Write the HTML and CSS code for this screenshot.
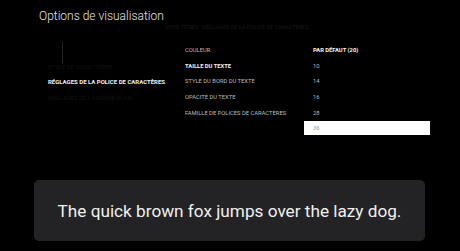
FILE: index.html
```html
<!DOCTYPE html>
<html lang="fr">
<head>
<meta charset="utf-8">
<link rel="stylesheet" href="styles.css">
</head>
<body>
<div class="screen">
  <h1 class="title">Options de visualisation</h1>
  <div class="crumb">SOUS-TITRES · RÉGLAGES DE LA POLICE DE CARACTÈRES</div>
  <div class="settings">
    <nav class="nav">
      <div class="nav-item"><div class="scroll-line"></div></div>
      <div class="nav-item faint">STYLE DE SOUS-TITRES</div>
      <div class="nav-item active">RÉGLAGES DE LA POLICE DE CARACTÈRES</div>
      <div class="nav-item faint">RÉGLAGES DE L'ARRIÈRE-PLAN</div>
    </nav>
    <div class="table">
      <div class="label">COULEUR</div>
      <div class="value bold">PAR DÉFAUT (20)</div>
      <div class="label bold">TAILLE DU TEXTE</div>
      <div class="value">10</div>
      <div class="label">STYLE DU BORD DU TEXTE</div>
      <div class="value">14</div>
      <div class="label">OPACITÉ DU TEXTE</div>
      <div class="value">16</div>
      <div class="label">FAMILLE DE POLICES DE CARACTÈRES</div>
      <div class="value">28</div>
      <div class="label"></div>
      <div class="value selected">36</div>
    </div>
  </div>
  <div class="caption-wrap">
    <div class="caption">The quick brown fox jumps over the lazy dog.</div>
  </div>
</div>
</body>
</html>
```
FILE: styles.css
```css
html, body {
  margin: 0;
  padding: 0;
  background: #000;
}
.screen {
  width: 460px;
  height: 251px;
  overflow: hidden;
  background: #000;
  font-family: Roboto, "Liberation Sans", sans-serif;
  display: flex;
  flex-direction: column;
}
.title {
  margin: 0;
  padding: 9px 0 0 39px;
  font-size: 12px;
  line-height: 15px;
  font-weight: 300;
  color: #e6e6e6;
}
.crumb {
  margin-left: 165px;
  height: 8px;
  font-size: 5.5px;
  line-height: 6px;
  color: #181818;
  white-space: nowrap;
}
.settings {
  display: flex;
  margin-top: 11px;
  padding-left: 48px;
}
.nav {
  width: 137px;
  display: grid;
  grid-auto-rows: 15.7px;
  align-content: start;
}
.scroll-line {
  width: 1px;
  height: 21px;
  margin: -1px 0 0 14px;
  background: #262626;
}
.nav-item {
  font-size: 6px;
  line-height: 15.7px;
  white-space: nowrap;
}
.nav-item.faint {
  color: #121212;
}
.nav-item.active {
  color: #f2f2f2;
  font-weight: 700;
}
.table {
  display: grid;
  grid-template-columns: 119px 126px;
  grid-auto-rows: 15.7px;
}
.label, .value {
  font-size: 5.8px;
  line-height: 15.7px;
  color: #bdbdbd;
  white-space: nowrap;
}
.value {
  padding-left: 9px;
}
.bold {
  font-weight: 700;
  color: #f4f4f4;
}
.value.selected {
  background: #fff;
  color: #9a9a9a;
  height: 14px;
  line-height: 14px;
}
.caption-wrap {
  margin-top: auto;
  padding: 0 35px 10px 34px;
}
.caption {
  height: 61px;
  background: #232325;
  border-radius: 5px;
  color: #f0f0f0;
  font-size: 17.2px;
  display: flex;
  align-items: center;
  justify-content: center;
}
```
